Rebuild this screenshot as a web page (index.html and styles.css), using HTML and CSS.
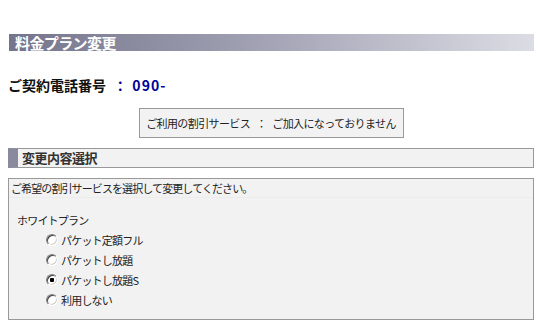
FILE: index.html
```html
<!DOCTYPE html>
<html lang="ja">
<head>
  <meta charset="UTF-8" />
  <title>料金プラン変更</title>
  <link rel="stylesheet" href="styles.css">
</head>
<body>
  <div class="page">
    <h1 class="title">料金プラン変更</h1>

    <p class="tel">ご契約電話番号 <span class="num">： 090-</span></p>

    <div class="status">ご利用の割引サービス&nbsp;：&nbsp;ご加入になっておりません</div>

    <h2 class="sec">変更内容選択</h2>

    <div class="panel">
      <p class="lead">ご希望の割引サービスを選択して変更してください。</p>
      <div class="plan">
        <p class="plan-name">ホワイトプラン</p>
        <label class="opt"><input type="radio" name="plan" /> パケット定額フル</label>
        <label class="opt"><input type="radio" name="plan" /> パケットし放題</label>
        <label class="opt"><input type="radio" name="plan" checked /> パケットし放題S</label>
        <label class="opt"><input type="radio" name="plan" />利用しない</label>
      </div>
    </div>
  </div>
</body>
</html>
```

FILE: styles.css
```css
body {
  margin: 0;
  padding: 0;
  background: #fff;
  color: #222;
  font-family: "Noto Sans CJK JP", "Noto Sans", sans-serif;
  font-size: 11px;
}
p, h1, h2 {
  margin: 0;
}
.page {
  width: 526px;
  margin-left: 8px;
  padding-top: 34px;
}
.title {
  height: 17px;
  margin-left: 1px;
  padding-left: 6px;
  background: linear-gradient(to right, #74748c 0%, #a4a4b6 50%, #dcdce4 100%);
  color: #fff;
  font-size: 15px;
  font-weight: bold;
  line-height: 17px;
  letter-spacing: -0.6px;
}
.tel {
  margin-top: 25px;
  font-size: 14px;
  font-weight: bold;
  line-height: 18px;
  color: #111;
}
.num {
  color: #000099;
  margin-left: 4px;
  letter-spacing: 1px;
}
.status {
  width: 263px;
  height: 28px;
  margin: 14px auto 0;
  border: 1px solid #999;
  background: #f2f2f2;
  line-height: 28px;
  text-align: center;
  letter-spacing: -0.6px;
  word-spacing: 4px;
}
.sec {
  margin-top: 10px;
  height: 18px;
  border: 1px solid #999;
  border-left: 10px solid #8a8a9e;
  background: #f2f2f2;
  padding-left: 4px;
  font-size: 13px;
  font-weight: bold;
  line-height: 18px;
  color: #333;
  letter-spacing: -0.5px;
}
.panel {
  margin-top: 10px;
  height: 140px;
  border: 1px solid #999;
  background: #f2f2f2;
}
.lead {
  padding-left: 2px;
  line-height: 18px;
  letter-spacing: -0.9px;
  border-bottom: 1px solid #ececec;
}
.plan {
  padding: 12px 0 0 8px;
  letter-spacing: -0.8px;
}
.plan-name {
  line-height: 20px;
}
.opt {
  display: flex;
  align-items: center;
  height: 20px;
  padding-left: 29px;
}
.opt input {
  appearance: none;
  -webkit-appearance: none;
  width: 12px;
  height: 12px;
  margin: 0 3px 0 0;
  border-radius: 50%;
  border: 1px solid;
  border-color: #808080 #fff #fff #808080;
  background: #fff;
  box-shadow: inset 1px 1px 0 #404040, inset -1px -1px 0 #d4d0c8;
}
.opt input:checked {
  background: radial-gradient(circle, #000 0, #000 2px, #fff 2.5px);
}
```
